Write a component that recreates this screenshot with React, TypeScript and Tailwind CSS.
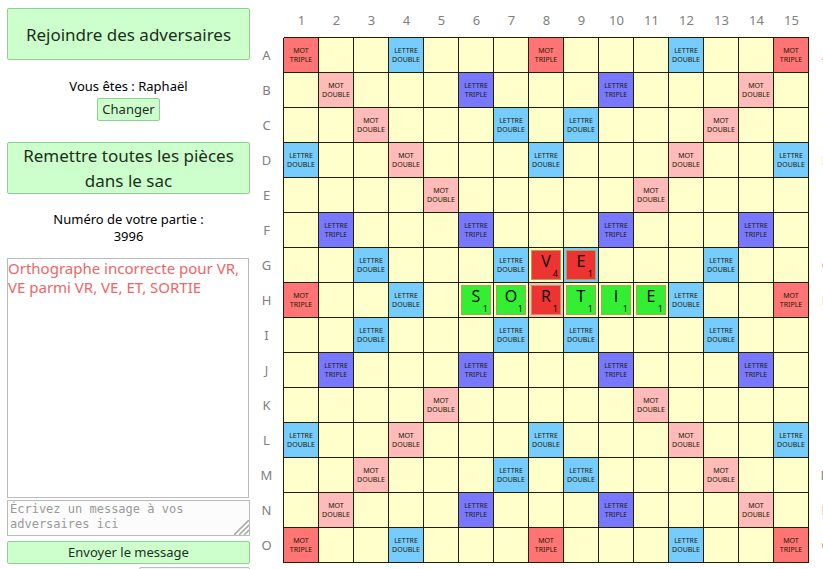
const LAYOUT = [
  'T..d...T...d..T',
  '.D...t...t...D.',
  '..D...d.d...D..',
  'd..D...d...D..d',
  '....D.....D....',
  '.t...t...t...t.',
  '..d...d.d...d..',
  'T..d...C...d..T',
  '..d...d.d...d..',
  '.t...t...t...t.',
  '....D.....D....',
  'd..D...d...D..d',
  '..D...d.d...D..',
  '.D...t...t...D.',
  'T..d...T...d..T',
];

const SQUARES: Record<string, { bg: string; text: string[] }> = {
  T: { bg: 'bg-[#ff7575]', text: ['MOT', 'TRIPLE'] },
  D: { bg: 'bg-[#ffbaba]', text: ['MOT', 'DOUBLE'] },
  t: { bg: 'bg-[#7777ff]', text: ['LETTRE', 'TRIPLE'] },
  d: { bg: 'bg-[#77ccff]', text: ['LETTRE', 'DOUBLE'] },
  C: { bg: 'bg-[#ffbaba]', text: [] },
  '.': { bg: 'bg-[#ffffcc]', text: [] },
};

type TileData = { letter: string; points: number; wrong?: boolean };

const TILES: Record<string, TileData> = {
  G8: { letter: 'V', points: 4, wrong: true },
  G9: { letter: 'E', points: 1, wrong: true },
  H6: { letter: 'S', points: 1 },
  H7: { letter: 'O', points: 1 },
  H8: { letter: 'R', points: 1, wrong: true },
  H9: { letter: 'T', points: 1 },
  H10: { letter: 'I', points: 1 },
  H11: { letter: 'E', points: 1 },
};

const BUTTON =
  'block w-full rounded-xs border border-[#8fcf8f] bg-[#ccffcc] text-[#1c2f1c] text-center';

function Tile({ letter, points, wrong }: TileData) {
  return (
    <div
      className={`relative mx-auto size-[30px] border border-[#b0a050] text-center font-['Open_Sans','Noto_Sans',sans-serif] text-black ${
        wrong ? 'bg-[#ee3333]' : 'bg-[#33ee33]'
      }`}
    >
      <span className="block text-[16px] leading-[20px]">{letter}</span>
      <span className="absolute right-[2px] bottom-0 text-[9px] leading-[10px]">{points}</span>
    </div>
  );
}

function Board() {
  return (
    <table className="w-[594px] shrink-0 table-fixed border-separate border-spacing-0 text-[#808080]">
      <thead>
        <tr className="h-[38px]">
          <td className="w-[34px]" />
          {LAYOUT.map((_, i) => (
            <th
              key={i}
              scope="col"
              className="w-[35px] border-b border-[#221f00] p-0 pt-1 text-[13px] font-normal"
            >
              {i + 1}
            </th>
          ))}
          <td className="w-[35px]" />
        </tr>
      </thead>
      <tbody>
        {LAYOUT.map((row, r) => {
          const name = String.fromCharCode(65 + r);
          return (
            <tr key={name} className="h-[35px]">
              <th
                scope="row"
                className="border-r border-[#221f00] p-0 pb-[2px] text-[13px] leading-4 font-normal"
              >
                {name}
              </th>
              {row.split('').map((code, c) => {
                const square = SQUARES[code];
                const tile = TILES[`${name}${c + 1}`];
                return (
                  <td
                    key={c}
                    className={`border-r border-b border-[#221f00] p-0 text-center align-middle text-[7px] leading-[9px] text-[#221f00] ${square.bg}`}
                  >
                    {tile ? (
                      <Tile {...tile} />
                    ) : (
                      square.text.map((line) => (
                        <span key={line} className="block">
                          {line}
                        </span>
                      ))
                    )}
                  </td>
                );
              })}
              <td className="p-0 pb-[2px] text-center text-[13px] leading-4">{name}</td>
            </tr>
          );
        })}
      </tbody>
    </table>
  );
}

export default function App() {
  return (
    <div className="flex h-screen items-start overflow-hidden bg-white font-['Noto_Sans','Open_Sans',sans-serif] text-black">
      <aside className="w-[250px] shrink-0 pt-2 pl-[7px] text-[13px] leading-[17px]">
        <button type="button" className={`${BUTTON} h-[52px] text-[17px] leading-[25px]`}>
          Rejoindre des adversaires
        </button>
        <p className="mt-[18px] text-center">Vous êtes : Raphaël</p>
        <button
          type="button"
          className="mx-auto mt-[3px] block h-[23px] rounded-xs border border-[#8fcf8f] bg-[#ccffcc] px-1 text-[#1c2f1c]"
        >
          Changer
        </button>
        <button type="button" className={`${BUTTON} mt-[21px] h-[52px] text-[17px] leading-[25px]`}>
          Remettre toutes les pièces dans le sac
        </button>
        <p className="mt-[17px] text-center">
          Numéro de votre partie :<br />
          3996
        </p>
        <div className="mt-[13px] mr-px h-[240px] border border-[#bbbbbb] text-[15px] leading-[19px] text-[#ee6666]">
          Orthographe incorrecte pour VR, VE parmi VR, VE, ET, SORTIE
        </div>
        <div className="relative mt-[2px] h-9">
          <textarea
            aria-label="Message"
            placeholder="Écrivez un message à vos adversaires ici"
            className="block size-full resize-none overflow-hidden border border-[#bbbbbb] bg-[#fcfcfc] px-[2px] py-px font-['DejaVu_Sans_Mono',monospace] text-[12px] leading-[15px] placeholder:text-[#999999]"
          />
          <svg
            className="pointer-events-none absolute right-px bottom-px"
            width="15"
            height="15"
            viewBox="0 0 15 15"
            stroke="#aaa"
            strokeWidth="1.6"
            aria-hidden="true"
          >
            <path d="M0 15 15 0M5 15 15 5M10 15 15 10" />
          </svg>
        </div>
        <button type="button" className={`${BUTTON} mt-[5px] h-[23px]`}>
          Envoyer le message
        </button>
        <select
          aria-label="Langue"
          className="mt-[3px] ml-auto block h-6 w-[111px] appearance-none rounded-xs border border-[#bbbbbb] bg-[#f4f4f4]"
        />
      </aside>
      <Board />
    </div>
  );
}
